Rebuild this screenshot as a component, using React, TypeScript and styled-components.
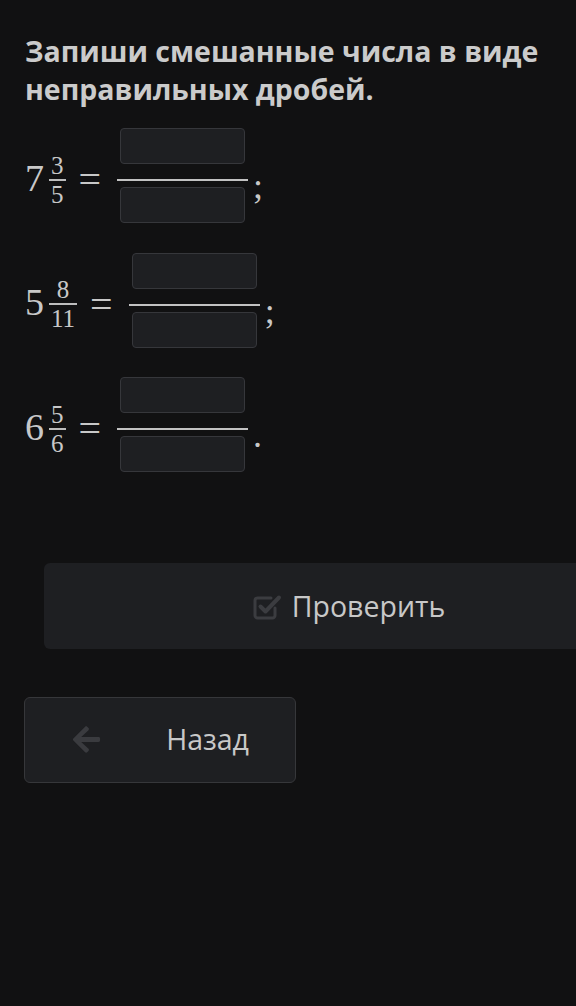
import React from "react";
import styled, { createGlobalStyle } from "styled-components";
import { FaArrowLeft } from "react-icons/fa";

type Mixed = {
  whole: number;
  num: number;
  den: number;
  end: string;
};

const tasks: Mixed[] = [
  { whole: 7, num: 3, den: 5, end: ";" },
  { whole: 5, num: 8, den: 11, end: ";" },
  { whole: 6, num: 5, den: 6, end: "." },
];

const GlobalStyle = createGlobalStyle`
  html, body {
    margin: 0;
    padding: 0;
    background: #111112;
    overflow: hidden;
  }
  * {
    box-sizing: border-box;
  }
`;

const CheckSquareIcon = () => (
  <svg width="32" height="28" viewBox="0 0 32 28" fill="none">
    <path
      d="M20 6H6.5A2.5 2.5 0 0 0 4 8.5v15A2.5 2.5 0 0 0 6.5 26h15a2.5 2.5 0 0 0 2.5-2.5V16"
      stroke="#3b3c40"
      strokeWidth="3"
      strokeLinecap="round"
    />
    <path
      d="M9.5 14.5l5 5L28 5.5"
      stroke="#3b3c40"
      strokeWidth="4"
      strokeLinecap="round"
      strokeLinejoin="round"
    />
  </svg>
);

const App: React.FC = () => {
  return (
    <>
      <GlobalStyle />
      <Page>
        <Title>Запиши смешанные числа в виде неправильных дробей.</Title>
        <Tasks>
          {tasks.map((t) => (
            <MathRow key={t.whole}>
              <Whole>{t.whole}</Whole>
              <SmallFrac>
                <SmallNum>{t.num}</SmallNum>
                <SmallBar />
                <SmallDen>{t.den}</SmallDen>
              </SmallFrac>
              <Equals>=</Equals>
              <AnswerFrac>
                <AnswerInput aria-label="числитель" />
                <AnswerBar />
                <AnswerInput aria-label="знаменатель" />
              </AnswerFrac>
              <Punct>{t.end}</Punct>
            </MathRow>
          ))}
        </Tasks>
        <CheckButton>
          <CheckSquareIcon />
          <span>Проверить</span>
        </CheckButton>
        <BackButton>
          <BackIcon>
            <FaArrowLeft />
          </BackIcon>
          <span>Назад</span>
        </BackButton>
      </Page>
    </>
  );
};

const Page = styled.div`
  width: 576px;
  min-height: 1006px;
  overflow: hidden;
  padding: 32px 0 0 25px;
  font-family: "Open Sans", "Noto Sans", sans-serif;
  color: #cbcbcb;
`;

const Title = styled.h1`
  margin: 0;
  width: 540px;
  font-size: 28.5px;
  line-height: 38px;
  font-weight: 700;
  color: #cbcbcb;
`;

const Tasks = styled.div`
  display: flex;
  flex-direction: column;
  row-gap: 20.5px;
  margin-top: 20px;
`;

const MathRow = styled.div`
  display: flex;
  align-items: center;
  font-family: "Liberation Serif", "Times New Roman", serif;
  color: #c8c8c8;
`;

const Whole = styled.span`
  font-size: 38px;
  line-height: 1;
  padding-bottom: 5px;
`;

const SmallFrac = styled.span`
  display: inline-flex;
  flex-direction: column;
  align-items: stretch;
  margin-left: 5px;
  font-size: 25px;
  text-align: center;
`;

const SmallNum = styled.span`
  line-height: 18px;
  padding: 0 2px 4px;
`;

const SmallDen = styled.span`
  line-height: 18px;
  padding: 5px 2px 0;
`;

const SmallBar = styled.span`
  height: 2px;
  background: #bdbdbd;
`;

const Equals = styled.span`
  font-size: 40px;
  line-height: 1;
  margin: 0 16px 0 13px;
`;

const AnswerFrac = styled.span`
  display: inline-flex;
  flex-direction: column;
  align-items: center;
  padding-bottom: 9px;
`;

const AnswerInput = styled.input`
  width: 125px;
  height: 36px;
  margin: 0 3px;
  border: 1px solid #36373b;
  border-radius: 4px;
  background: #1e1f22;
  outline: none;
`;

const AnswerBar = styled.span`
  align-self: stretch;
  height: 2px;
  margin: 15px 0 6px;
  background: #c2c2c2;
`;

const Punct = styled.span`
  font-size: 36px;
  line-height: 1;
  margin-left: 5px;
  padding-top: 12px;
`;

const CheckButton = styled.button`
  display: flex;
  align-items: center;
  justify-content: center;
  column-gap: 9px;
  width: 608px;
  height: 86px;
  margin: 82px 0 0 19px;
  border: none;
  border-radius: 6px;
  background: #1e1f22;
  font-family: "Open Sans", "Noto Sans", sans-serif;
  font-size: 28.5px;
  color: #c8c8c8;
`;

const BackButton = styled.button`
  display: flex;
  align-items: center;
  justify-content: space-between;
  width: 272px;
  height: 86px;
  margin: 48px 0 0 -1px;
  padding: 0 46px 2px 46px;
  border: 1px solid #36373a;
  border-radius: 6px;
  background: #1e1f22;
  font-family: "Open Sans", "Noto Sans", sans-serif;
  font-size: 28.5px;
  color: #c8c8c8;
`;

const BackIcon = styled.span`
  display: flex;
  font-size: 31px;
  color: #3a3b3f;
`;

export default App;
